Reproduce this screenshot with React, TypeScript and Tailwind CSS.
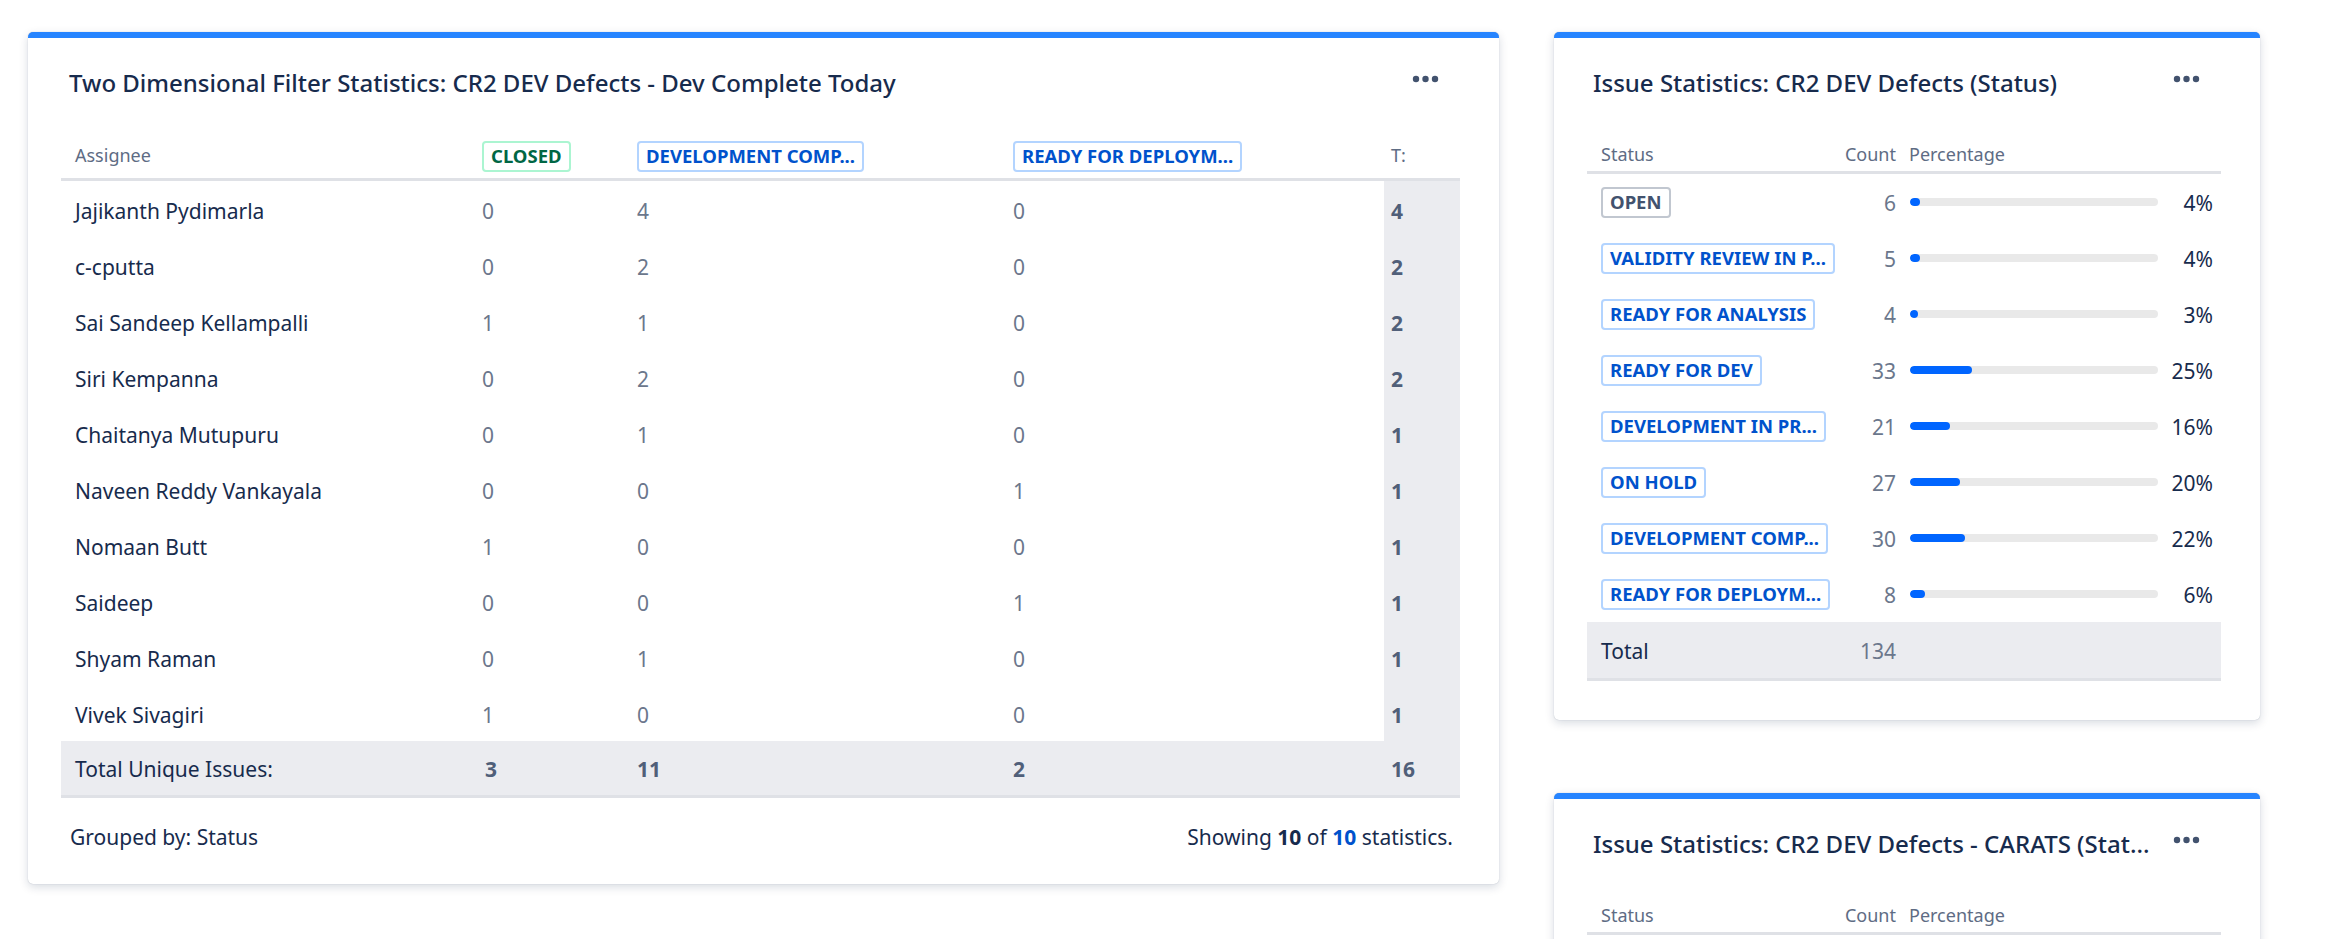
import React from "react";

type Tone = "green" | "blue" | "gray";

const toneClass: Record<Tone, string> = {
  green: "border-[#ABF5D1] text-[#006644]",
  blue: "border-[#B3D4FF] text-[#0052CC]",
  gray: "border-[#C1C7D0] text-[#42526E]",
};

function Lozenge({ text, tone }: { text: string; tone: Tone }) {
  return (
    <span
      className={`inline-flex h-[31px] items-center whitespace-nowrap rounded-[4px] border-2 bg-white px-[7px] text-[18.5px] font-bold uppercase leading-none ${toneClass[tone]}`}
    >
      {text}
    </span>
  );
}

function Dots() {
  return (
    <div className="flex h-[30px] shrink-0 items-center pb-[8px]">
      <svg width="28" height="8" viewBox="0 0 28 8">
        <circle cx="4" cy="4" r="3.2" fill="#42526E" />
        <circle cx="13.5" cy="4" r="3.2" fill="#42526E" />
        <circle cx="23" cy="4" r="3.2" fill="#42526E" />
      </svg>
    </div>
  );
}

function CardHeader({ title, pl }: { title: string; pl: string }) {
  return (
    <div className={`flex h-[83px] items-start justify-between gap-[14px] pr-[59px] pt-[30px] ${pl}`}>
      <div className="whitespace-nowrap text-[24px] font-medium leading-[30px] text-[#172B4D]">{title}</div>
      <Dots />
    </div>
  );
}

const twoDRows: [string, number, number, number, number][] = [
  ["Jajikanth Pydimarla", 0, 4, 0, 4],
  ["c-cputta", 0, 2, 0, 2],
  ["Sai Sandeep Kellampalli", 1, 1, 0, 2],
  ["Siri Kempanna", 0, 2, 0, 2],
  ["Chaitanya Mutupuru", 0, 1, 0, 1],
  ["Naveen Reddy Vankayala", 0, 0, 1, 1],
  ["Nomaan Butt", 1, 0, 0, 1],
  ["Saideep", 0, 0, 1, 1],
  ["Shyam Raman", 0, 1, 0, 1],
  ["Vivek Sivagiri", 1, 0, 0, 1],
];

const statusRows: { label: string; tone: Tone; count: number; pct: number }[] = [
  { label: "OPEN", tone: "gray", count: 6, pct: 4 },
  { label: "VALIDITY REVIEW IN P...", tone: "blue", count: 5, pct: 4 },
  { label: "READY FOR ANALYSIS", tone: "blue", count: 4, pct: 3 },
  { label: "READY FOR DEV", tone: "blue", count: 33, pct: 25 },
  { label: "DEVELOPMENT IN PR...", tone: "blue", count: 21, pct: 16 },
  { label: "ON HOLD", tone: "blue", count: 27, pct: 20 },
  { label: "DEVELOPMENT COMP...", tone: "blue", count: 30, pct: 22 },
  { label: "READY FOR DEPLOYM...", tone: "blue", count: 8, pct: 6 },
];

const cardBase =
  "rounded-[5px] border-t-[6px] border-[#2684FF] bg-white shadow-[0_3px_10px_rgba(9,30,66,0.16),0_0_1px_rgba(9,30,66,0.30)]";

function TwoDimensionalCard() {
  const grid = "grid grid-cols-[414px_155px_376px_378px_76px]";
  return (
    <div className={`w-[1471px] shrink-0 pb-[32px] ${cardBase}`}>
      <CardHeader
        title="Two Dimensional Filter Statistics: CR2 DEV Defects - Dev Complete Today"
        pl="pl-[41px]"
      />
      <div className="ml-[33px] mr-[39px]">
        <div className={`${grid} h-[60px] border-b-[3px] border-[#DFE1E6]`}>
          <div className="flex items-end pb-[10px] pl-[14px] text-[18px] leading-[26px] text-[#5E6C84]">Assignee</div>
          <div className="flex items-end pb-[6px] pl-[7px]">
            <Lozenge text="CLOSED" tone="green" />
          </div>
          <div className="flex items-end pb-[6px] pl-[7px]">
            <Lozenge text="DEVELOPMENT COMP..." tone="blue" />
          </div>
          <div className="flex items-end pb-[6px] pl-[7px]">
            <Lozenge text="READY FOR DEPLOYM..." tone="blue" />
          </div>
          <div className="flex items-end pb-[10px] pl-[7px] text-[18px] leading-[26px] text-[#5E6C84]">T:</div>
        </div>
        {twoDRows.map(([name, a, b, c, t]) => (
          <div key={name} className={`${grid} h-[56px] text-[21px]`}>
            <div className="flex items-center pl-[14px] pt-[6px] text-[#172B4D]">{name}</div>
            <div className="flex items-center pl-[7px] pt-[6px] text-[#6B778C]">{a}</div>
            <div className="flex items-center pl-[7px] pt-[6px] text-[#6B778C]">{b}</div>
            <div className="flex items-center pl-[7px] pt-[6px] text-[#6B778C]">{c}</div>
            <div className="flex items-center bg-[#EBECF0] pl-[7px] pt-[6px] font-bold text-[#505F79]">{t}</div>
          </div>
        ))}
        <div className={`${grid} h-[57px] border-b-[3px] border-[#DFE1E6] bg-[#EBECF0] pt-[3px] text-[21px]`}>
          <div className="flex items-center pl-[14px] text-[#172B4D]">Total Unique Issues:</div>
          <div className="flex items-center pl-[10px] font-bold text-[#505F79]">3</div>
          <div className="flex items-center pl-[7px] font-bold text-[#505F79]">11</div>
          <div className="flex items-center pl-[7px] font-bold text-[#505F79]">2</div>
          <div className="flex items-center pl-[7px] font-bold text-[#505F79]">16</div>
        </div>
      </div>
      <div className="mt-[24px] flex justify-between pl-[42px] pr-[46px] text-[21px] leading-[30px] text-[#172B4D]">
        <span>Grouped by: Status</span>
        <span>
          Showing <b className="font-bold">10</b> of <b className="font-bold text-[#0052CC]">10</b> statistics.
        </span>
      </div>
    </div>
  );
}

function StatusHeaderRow() {
  return (
    <div className="grid h-[53px] grid-cols-[256px_60px_1fr] border-b-[3px] border-[#DFE1E6] text-[18px] leading-[26px] text-[#5E6C84]">
      <div className="pl-[14px] pt-[20px]">Status</div>
      <div className="pr-[7px] pt-[20px] text-right">Count</div>
      <div className="pl-[6px] pt-[20px]">Percentage</div>
    </div>
  );
}

function IssueStatsCard() {
  return (
    <div className={`w-[706px] pb-[39px] ${cardBase}`}>
      <CardHeader title="Issue Statistics: CR2 DEV Defects (Status)" pl="pl-[39px]" />
      <div className="ml-[33px] mr-[39px]">
        <StatusHeaderRow />
        {statusRows.map((r) => (
          <div key={r.label} className="grid h-[56px] grid-cols-[256px_60px_1fr] text-[21px]">
            <div className="flex items-center pl-[14px]">
              <Lozenge text={r.label} tone={r.tone} />
            </div>
            <div className="flex items-center justify-end pr-[7px] pt-[3px] text-[#6B778C]">{r.count}</div>
            <div className="flex items-center pl-[7px] pr-[8px]">
              <div className="h-[8px] w-[248px] shrink-0 overflow-hidden rounded-full bg-[#E9E9E9]">
                <div
                  className="h-full rounded-full bg-[#0065FF]"
                  style={{ width: `${Math.max(8, (248 * r.pct) / 100)}px` }}
                />
              </div>
              <div className="flex-1 pt-[3px] text-right text-[#172B4D]">{r.pct}%</div>
            </div>
          </div>
        ))}
        <div className="grid h-[59px] grid-cols-[256px_60px_1fr] border-b-[3px] border-[#DFE1E6] bg-[#EBECF0] pt-[3px] text-[21px]">
          <div className="flex items-center pl-[14px] text-[#172B4D]">Total</div>
          <div className="flex items-center justify-end pr-[7px] text-[#6B778C]">134</div>
          <div />
        </div>
      </div>
    </div>
  );
}

function CaratsCard() {
  return (
    <div className={`h-[420px] w-[706px] ${cardBase}`}>
      <CardHeader title="Issue Statistics: CR2 DEV Defects - CARATS (Stat..." pl="pl-[39px]" />
      <div className="ml-[33px] mr-[39px]">
        <StatusHeaderRow />
      </div>
    </div>
  );
}

export default function App() {
  return (
    <div className="flex h-[939px] items-start gap-[55px] overflow-hidden bg-white pl-[28px] pt-[32px] font-['Segoe_UI','Noto_Sans',sans-serif]">
      <TwoDimensionalCard />
      <div className="flex w-[706px] shrink-0 flex-col gap-[73px]">
        <IssueStatsCard />
        <CaratsCard />
      </div>
    </div>
  );
}
